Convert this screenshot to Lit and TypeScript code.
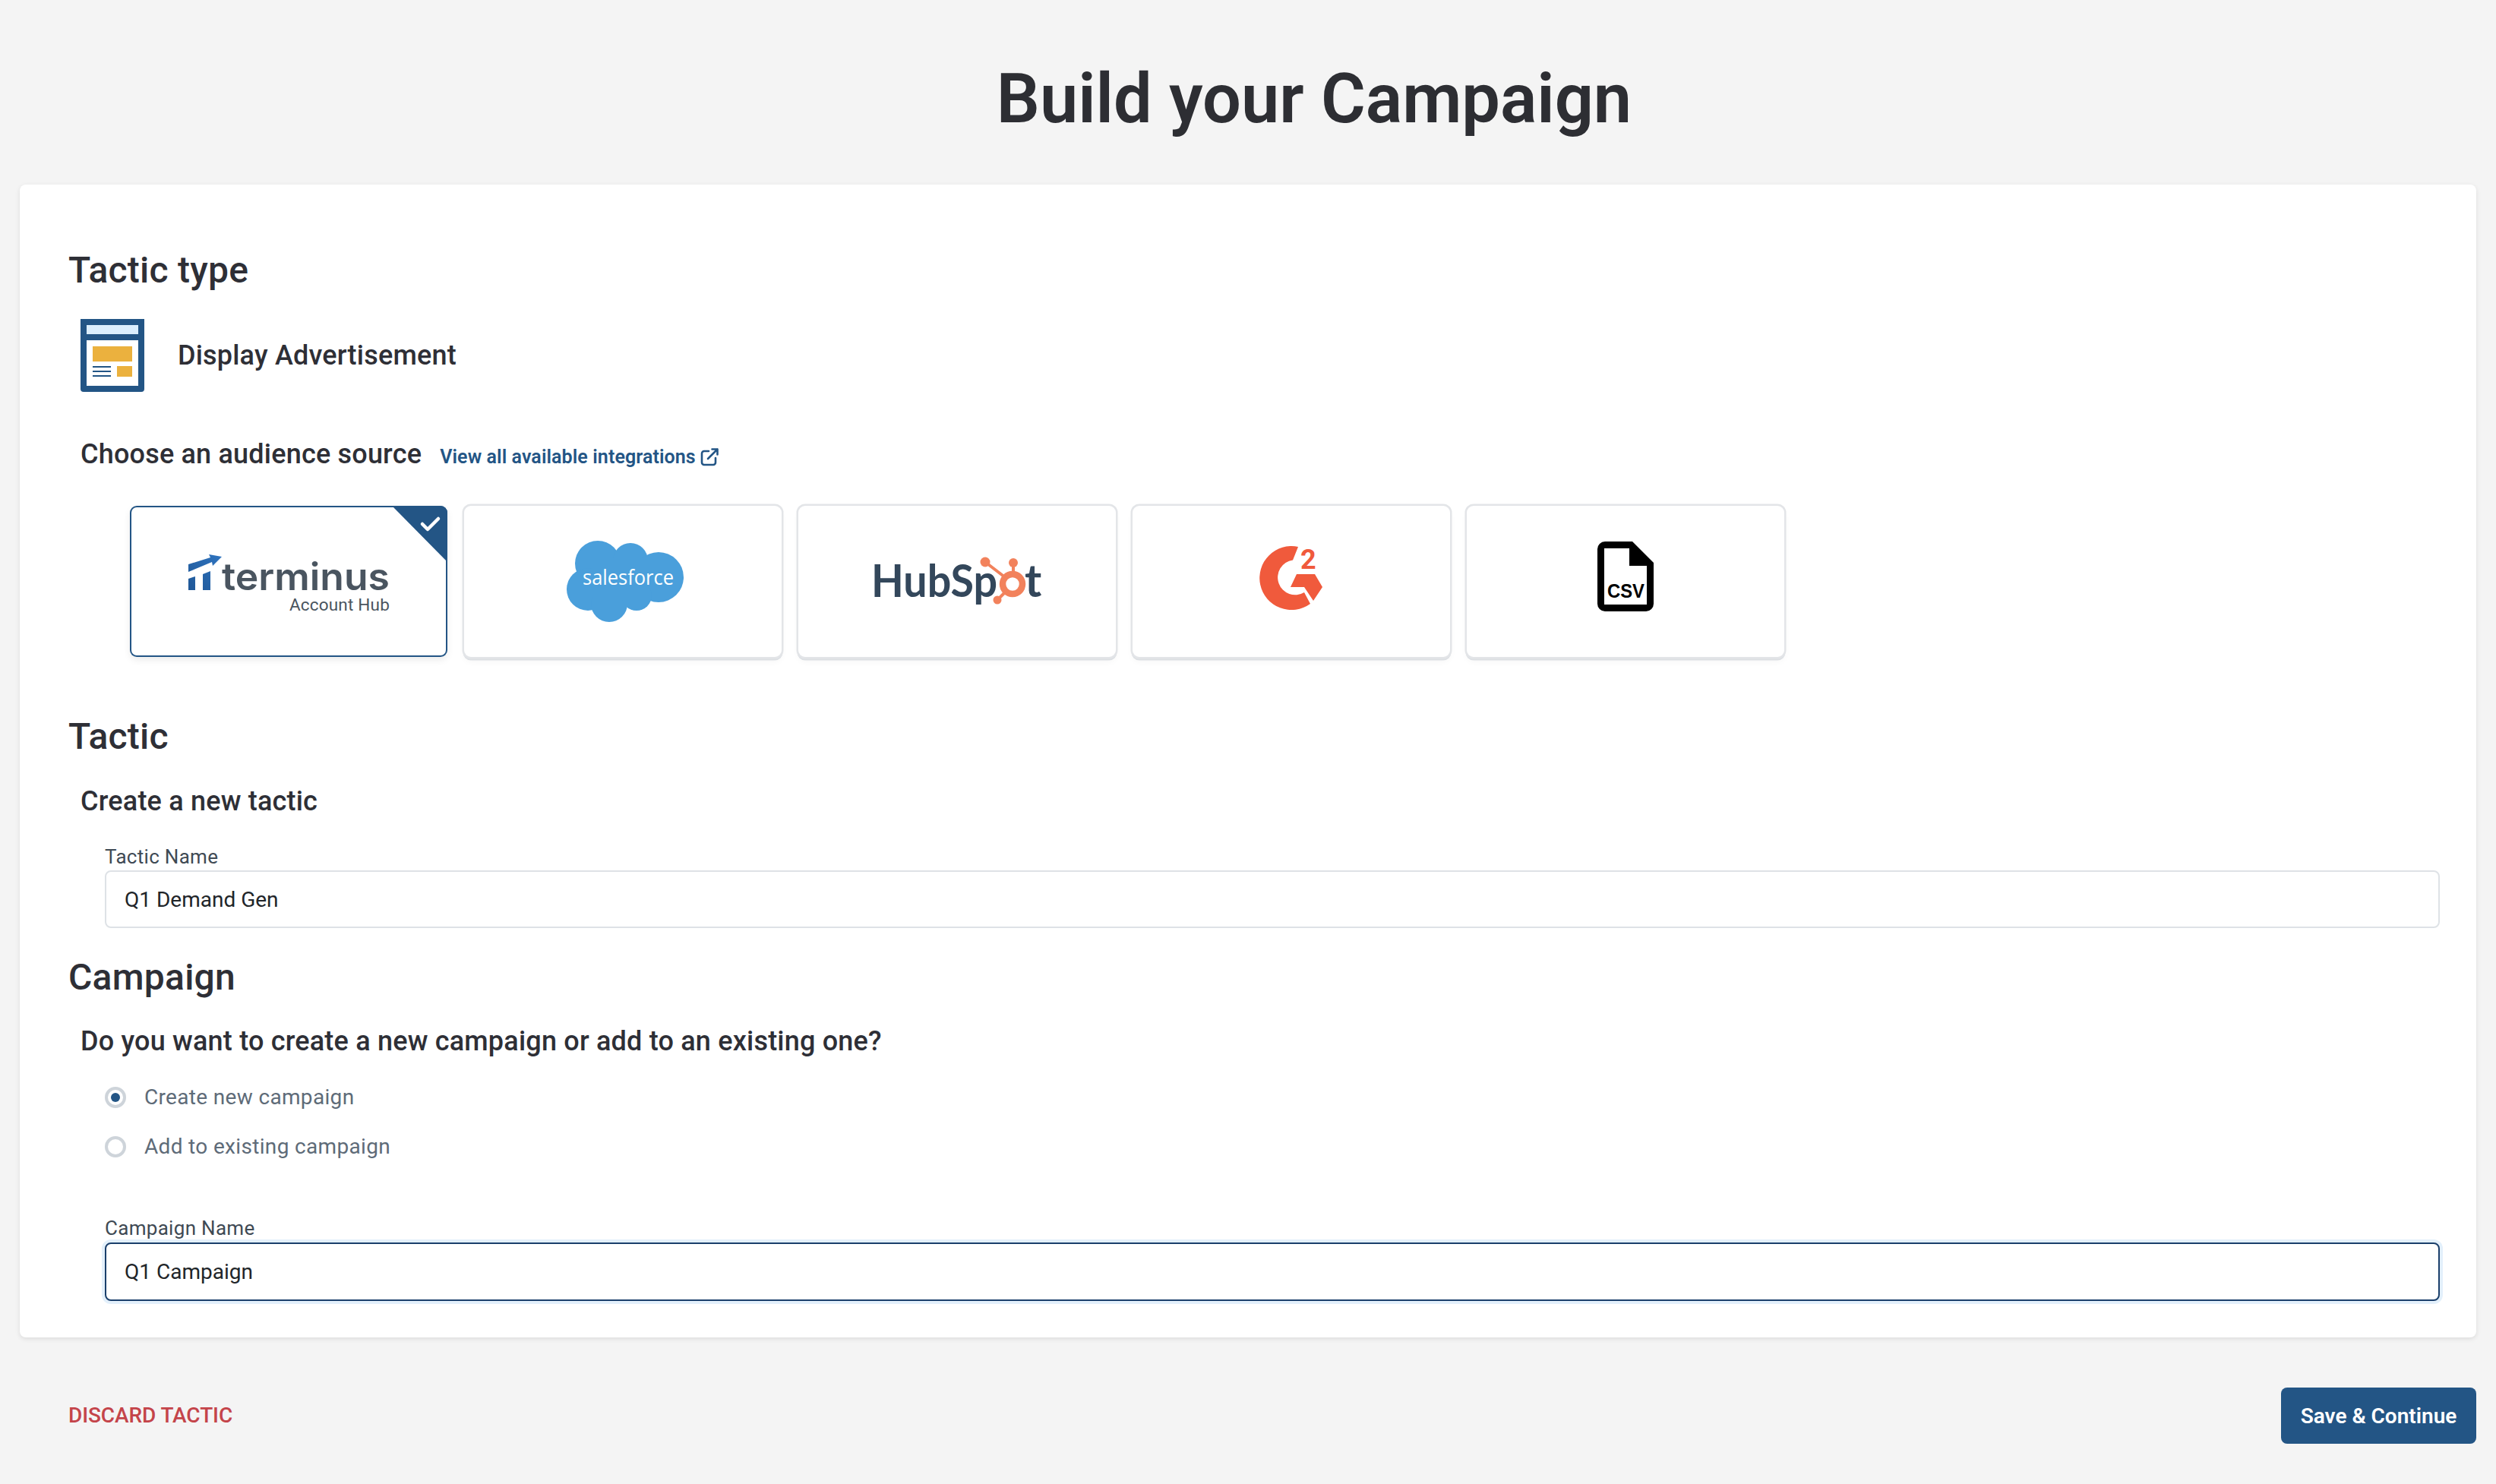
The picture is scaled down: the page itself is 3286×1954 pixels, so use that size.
import { LitElement, html, css, svg } from "lit";
import { customElement } from "lit/decorators.js";

const terminus = svg`<svg class="logo" viewBox="171 666 418 199">
  <defs><linearGradient id="tg" x1="0" y1="1" x2="1" y2="0"><stop offset="0" stop-color="#1f5796"/><stop offset="1" stop-color="#2f74c0"/></linearGradient></defs>
  <path fill="url(#tg)" d="M248 743 L277 734 L275 730 L292 733 L280 745 L279 740 L248 753Z M248 762 L257 759 V777 H248Z M267 756 L277 752 V777 H267Z"/>
  <text x="292" y="777" class="t-word" textLength="221" lengthAdjust="spacingAndGlyphs">terminus</text>
  <text x="513" y="804" class="t-sub" text-anchor="end">Account Hub</text>
  <path fill="#235585" d="M516 666 H589 V740Z"/>
  <path fill="none" stroke="#fff" stroke-width="4.5" stroke-linecap="round" stroke-linejoin="round" d="M556 690 L563 697 L577 683"/>
</svg>`;

const salesforce = svg`<svg class="logo" viewBox="611 666 418 199">
  <g fill="#4a9fdb">
    <circle cx="787" cy="742" r="30"/><circle cx="830" cy="738" r="23"/><circle cx="867" cy="760" r="33"/>
    <circle cx="774" cy="776" r="28"/><circle cx="802" cy="795" r="24"/><circle cx="838" cy="784" r="20"/>
    <rect x="780" y="735" width="70" height="55"/>
  </g>
  <text x="767" y="770" class="s-word" textLength="120" lengthAdjust="spacingAndGlyphs">salesforce</text>
</svg>`;

const hubspot = svg`<svg class="logo" viewBox="1051 666 418 199">
  <text x="1147" y="786" class="h-word" textLength="166" lengthAdjust="spacingAndGlyphs">HubSp</text>
  <text x="1349" y="786" class="h-word">t</text>
  <g stroke="#f2825c" fill="none">
    <circle cx="1333" cy="769" r="13" stroke-width="8.5"/>
    <path stroke-width="4" d="M1297 740 L1323 760 M1334 741 V756 M1313 790 L1324 779"/>
  </g>
  <g fill="#f2825c"><circle cx="1297" cy="740" r="6.5"/><circle cx="1334" cy="741" r="6"/><circle cx="1313" cy="790" r="5.5"/></g>
</svg>`;

const g2 = svg`<svg class="logo" viewBox="1491 666 418 199">
  <g fill="#f05a3c">
    <path d="M1709 720 A42 42 0 1 0 1725 795 L1717 780 A23 23 0 1 1 1702 737.5Z"/>
    <path d="M1707 756 H1731 L1741 773 L1729 791 L1717 773 H1699Z"/>
  </g>
  <text x="1712" y="749" class="g-two">2</text>
</svg>`;

const csv = svg`<svg class="logo" viewBox="1931 666 418 199">
  <path fill-rule="evenodd" d="M2113 713 H2149 L2177 741 V795 A10 10 0 0 1 2167 805 H2113 A10 10 0 0 1 2103 795 V723 A10 10 0 0 1 2113 713Z M2112 722 V796 H2168 V745 H2145 V722Z"/>
  <text x="2116" y="787" class="c-word" textLength="49" lengthAdjust="spacingAndGlyphs">CSV</text>
</svg>`;

@customElement("app-root")
export class AppRoot extends LitElement {
  static styles = css`
    :host { display: block; min-height: 1954px; background: #f4f4f4; font-family: Roboto, "Liberation Sans", sans-serif; color: #2e2f36; }
    h1, h2, h3 { margin: 0; font-weight: 500; }
    h1 { font-size: 90px; line-height: 72px; font-weight: 600; letter-spacing: 0; padding: 95px 0 76px 174px; text-align: center; color: #2d2e33; }
    .card { margin: 0 26px; padding: 85px 48px 48px 64px; background: #fff; border-radius: 8px; box-shadow: 0 2px 6px rgba(0,0,0,.1); }
    h2 { font-size: 48px; line-height: 56px; letter-spacing: .25px; }
    h3 { font-size: 36px; line-height: 44px; margin-left: 16px; letter-spacing: .2px; }
    .type { display: flex; align-items: center; gap: 44px; margin: 36px 0 0 16px; }
    .type svg { display: block; width: 84px; height: 96px; }
    .type span { font-size: 36px; font-weight: 500; letter-spacing: .2px; }
    .choose { display: flex; align-items: center; gap: 24px; margin: 60px 0 0 16px; }
    .choose h3 { margin-left: 0; }
    .link { display: flex; align-items: center; gap: 6px; font-size: 25px; letter-spacing: .1px; font-weight: 600; color: #235585; position: relative; top: 3px; }
    .link svg { width: 25px; height: 25px; display: block; }
    .sources { display: flex; gap: 22px; margin: 46px 0 0 81px; }
    .src { width: 418px; height: 199px; border-radius: 9px; overflow: hidden; background: #fff; box-sizing: border-box;
      box-shadow: 0 0 0 2.5px #e3e5e8, 0 3px 0 1.5px #dcdfe3, 0 6px 10px rgba(0,0,0,.04); }
    .src.sel { box-shadow: inset 0 0 0 2px #235585, 0 4px 10px rgba(0,0,0,.08); }
    .logo { display: block; width: 100%; height: 100%; }
    .t-word { font-family: Inter, sans-serif; font-weight: 600; font-size: 50px; fill: #4a5560; }
    .t-sub { font-family: Roboto, sans-serif; font-size: 22.5px; letter-spacing: .2px; fill: #4a5560; }
    .s-word { font-family: "Open Sans", sans-serif; font-weight: 400; font-size: 27px; fill: #fff; }
    .h-word { font-family: Lato, sans-serif; font-weight: 700; font-size: 60px; fill: #33475b; }
    .g-two { font-family: Roboto, sans-serif; font-weight: 700; font-size: 36px; fill: #f05a3c; }
    .c-word { font-family: "Liberation Sans", sans-serif; font-weight: 700; font-size: 26px; fill: #000; }
    .mt76 { margin-top: 77px; }
    .mt37 { margin-top: 37px; }
    .mt36 { margin-top: 35px; }
    .mt33 { margin-top: 34px; }
    .field { display: block; margin-left: 48px; }
    .field.a { margin-top: 35px; }
    .field.a label { margin-bottom: 2px; }
    .field.b { margin-top: 76px; }
    .field label { display: block; font-size: 26px; line-height: 32px; letter-spacing: .3px; color: #3f4a54; margin-bottom: 3px; }
    .field.b label { margin-bottom: 3px; padding-top: 1px; }
    .field input { display: block; width: 100%; height: 76px; box-sizing: border-box; padding: 0 24px; border: 2px solid #dee2e6; border-radius: 8px; font: 400 28px Roboto, sans-serif; color: #212529; background: #fff; outline: none; }
    .field input.focus { height: 77px; border-color: #1a3f6b; box-shadow: 0 0 0 4px #e3f0fb; }
    .radios { display: flex; flex-direction: column; gap: 37px; margin: 38px 0 0 48px; }
    .radio { display: flex; align-items: center; gap: 24px; font-size: 28px; line-height: 28px; letter-spacing: .33px; color: #5e6b78; }
    .dot { width: 28px; height: 28px; box-sizing: border-box; border: 4px solid #ced4da; border-radius: 50%; display: flex; align-items: center; justify-content: center; }
    .dot i { width: 12px; height: 12px; border-radius: 50%; background: #235585; display: block; }
    .footer { display: flex; justify-content: space-between; align-items: center; margin: 66px 26px 0 90px; }
    .discard { font-size: 28px; font-weight: 500; letter-spacing: -.1px; color: #c4444a; position: relative; top: -1px; }
    .save { width: 257px; height: 74px; border: 0; border-radius: 8px; background: #235585; color: #fff; font: 600 28px Roboto, sans-serif; padding: 0; }
  `;

  render() {
    return html`
      <h1>Build your Campaign</h1>
      <div class="card">
        <h2>Tactic type</h2>
        <div class="type">
          <svg viewBox="0 0 84 96">
            <path fill="#235585" d="M0 0H84V92A4 4 0 0 1 80 96H4A4 4 0 0 1 0 92Z"/>
            <rect x="8" y="8" width="68" height="12" fill="#dbeefd"/>
            <rect x="8" y="28" width="68" height="60" fill="#fff"/>
            <rect x="16" y="36" width="52" height="20" fill="#ebb13e"/>
            <rect x="48" y="62" width="20" height="14" fill="#ebb13e"/>
            <path fill="#235585" d="M16 62H40V64H16ZM16 68H40V70H16ZM16 74H40V76H16Z"/>
          </svg>
          <span>Display Advertisement</span>
        </div>
        <div class="choose">
          <h3>Choose an audience source</h3>
          <span class="link">View all available integrations
            <svg viewBox="0 0 25 25" fill="none" stroke="#235585" stroke-width="2.6" stroke-linecap="round" stroke-linejoin="round">
              <path d="M11 5H5A3 3 0 0 0 2 8V20A3 3 0 0 0 5 23H17A3 3 0 0 0 20 20V14"/>
              <path d="M10 15L22.5 2.5M15.5 2.5H22.5V9.5"/>
            </svg>
          </span>
        </div>
        <div class="sources">
          <div class="src sel">${terminus}</div>
          <div class="src">${salesforce}</div>
          <div class="src">${hubspot}</div>
          <div class="src">${g2}</div>
          <div class="src">${csv}</div>
        </div>
        <h2 class="mt76">Tactic</h2>
        <h3 class="mt36">Create a new tactic</h3>
        <div class="field a">
          <label>Tactic Name</label>
          <input value="Q1 Demand Gen" />
        </div>
        <h2 class="mt37">Campaign</h2>
        <h3 class="mt33">Do you want to create a new campaign or add to an existing one?</h3>
        <div class="radios">
          <div class="radio"><span class="dot"><i></i></span>Create new campaign</div>
          <div class="radio"><span class="dot"></span>Add to existing campaign</div>
        </div>
        <div class="field b">
          <label>Campaign Name</label>
          <input class="focus" value="Q1 Campaign" />
        </div>
      </div>
      <div class="footer">
        <span class="discard">DISCARD TACTIC</span>
        <button class="save">Save &amp; Continue</button>
      </div>
    `;
  }
}
